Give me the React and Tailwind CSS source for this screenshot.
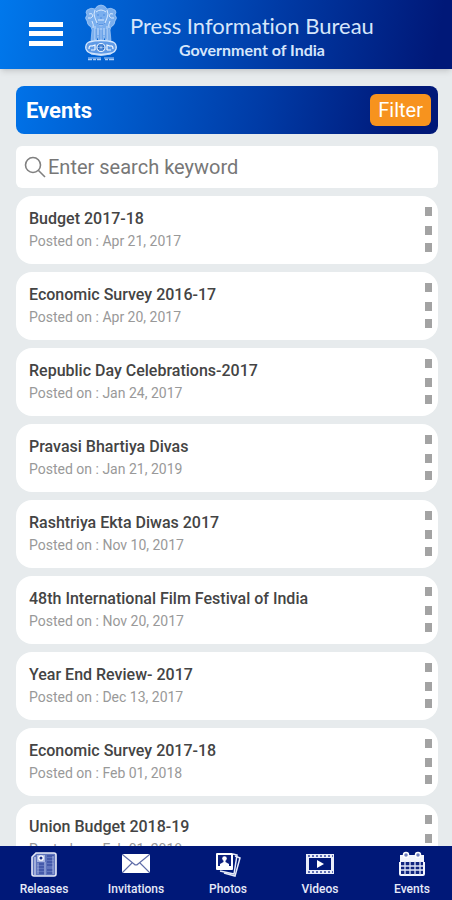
import React, { useState } from "react";

const events = [
  { title: "Budget 2017-18", date: "Apr 21, 2017" },
  { title: "Economic Survey 2016-17", date: "Apr 20, 2017" },
  { title: "Republic Day Celebrations-2017", date: "Jan 24, 2017" },
  { title: "Pravasi Bhartiya Divas", date: "Jan 21, 2019" },
  { title: "Rashtriya Ekta Diwas 2017", date: "Nov 10, 2017" },
  { title: "48th International Film Festival of India", date: "Nov 20, 2017" },
  { title: "Year End Review- 2017", date: "Dec 13, 2017" },
  { title: "Economic Survey 2017-18", date: "Feb 01, 2018" },
  { title: "Union Budget 2018-19", date: "Feb 01, 2018" },
];

const Emblem = () => (
  <svg width="34" height="58" viewBox="0 0 34 58" fill="none" aria-hidden="true">
    {/* lions */}
    <path
      d="M11 5 Q13 1 17 1 Q21 1 23 5 Q27 3 31 6 Q33 8 31 11 Q34 14 31 17 Q31 21 27 23 L26 26 L27 37 H22 L20 32 L19 38 H15 L14 32 L12 37 H7 L8 26 L7 23 Q3 21 3 17 Q0 14 3 11 Q1 8 3 6 Q7 3 11 5 Z"
      fill="#8fbcf2"
      fillOpacity="0.85"
      stroke="#b9d6fa"
      strokeWidth="0.6"
    />
    <path
      d="M11 6 Q9 10 11 14 Q12 20 17 22 Q22 20 23 14 Q25 10 23 6 M12 8 Q17 4 22 8 M5 10 Q8 8 9 12 Q7 15 4 14 M29 10 Q26 8 25 12 Q27 15 30 14 M8 17 Q10 21 9 24 M26 17 Q24 21 25 24 M14 16 H20"
      stroke="#d8e9fe"
      strokeWidth="1"
    />
    <path d="M13 11 H15 M19 11 H21 M16 14 H18 M13 19 Q17 23 21 19" stroke="#4c8ade" strokeWidth="1" />
    <path
      d="M11 22 V36 M14 24 V31 M17 24 V37 M20 24 V31 M23 22 V36"
      stroke="#d8e9fe"
      strokeWidth="0.8"
    />
    <path d="M12 25 V35 M22 25 V35 M16 26 V36 M18 26 V36" stroke="#4c8ade" strokeWidth="0.6" />
    {/* abacus with the wheel */}
    <path d="M5 38 Q17 35 29 38 Q33 40 32 45 Q31 48 28 49 Q17 52 6 49 Q3 48 2 45 Q1 40 5 38 Z" fill="#5f9ae6" stroke="#d8e9fe" strokeWidth="1.3" />
    <circle cx="17" cy="43.5" r="4" fill="#1b63c4" stroke="#f0f7ff" strokeWidth="1.1" />
    <path d="M17 40 V47 M13.500 43.500 H20.500 M14.500 41 L19.500 46 M19.500 41 L14.500 46" stroke="#cfe3fc" strokeWidth="0.5" />
    <path d="M5 45 Q5 41 8 42 L11 41 L11 46 M29 45 Q29 41 26 42 L23 41 L23 46 M7 46 H11 M23 46 H27" stroke="#f0f7ff" strokeWidth="1.2" />
    <path d="M7 50 Q17 53 27 50" stroke="#bcd7f9" strokeWidth="1" />
    {/* motto */}
    <path d="M4 54 H17 M20 54 H30" stroke="#b9d6fa" strokeWidth="0.9" />
    <path d="M4 55.500 H8 M9 55.500 H12 M13 55.500 H17 M21 55.500 H24 M25 55.500 H30" stroke="#a9cbf6" strokeWidth="1.5" />
  </svg>
);

const ReleasesIcon = () => (
  <svg width="28" height="28" viewBox="0 0 28 28" fill="none" aria-hidden="true">
    <path d="M6 3 H24 Q26 3 26 5 V24 Q26 26 24 26 H4 Q2 26 2 24 V7 Z" fill="#5f74bd" stroke="#e6eaf8" strokeWidth="1.6" />
    <path d="M5 7 V25" stroke="#e6eaf8" strokeWidth="1" />
    <path d="M7 5 H15 V12 H7 Z" fill="#aab7e2" />
    <circle cx="11" cy="8" r="2.200" fill="#1c318c" stroke="#fff" strokeWidth="1.3" />
    <path d="M17 6 H24 M17 9 H24 M17 12 H24" stroke="#2c4199" strokeWidth="1.2" />
    <path d="M7 14 H14 M7 17 H14 M7 20 H14 M7 23 H14 M17 15 H23 M17 20 H23 M17 23 H23" stroke="#2c4199" strokeWidth="1" />
    <path d="M15 12 V25 M8 13 V24 M23 6 V24" stroke="#aab7e2" strokeWidth="1" />
  </svg>
);

const InvitationsIcon = () => (
  <svg width="28" height="28" viewBox="0 0 28 28" fill="none" aria-hidden="true">
    <rect x="0" y="4" width="28" height="19" rx="2" fill="#fff" />
    <path d="M1 5 L12 14 Q14 16 16 14 L27 5 M1 22 L10 13 M27 22 L18 13" stroke="#5f6da8" strokeWidth="1.1" />
  </svg>
);

const PhotosIcon = () => (
  <svg width="28" height="28" viewBox="0 0 28 28" fill="none" aria-hidden="true">
    <path d="M21 6 L26 8 L21 26 L10 23" stroke="#e6eaf8" strokeWidth="1.5" />
    <path d="M19 4 L23 5 L20 24 L6 21" stroke="#e6eaf8" strokeWidth="1.5" />
    <rect x="2" y="3" width="17" height="17" rx="1" fill="#fff" />
    <rect x="4" y="5" width="13" height="11" fill="#0b1f7d" />
    <circle cx="10.500" cy="8.500" r="2.300" fill="#fff" />
    <path d="M9.500 10 H11.500 V12 L15 14 V16 H6 V14 L9.500 12 Z" fill="#fff" />
  </svg>
);

const VideosIcon = () => (
  <svg width="28" height="28" viewBox="0 0 28 28" fill="none" aria-hidden="true">
    <rect x="0" y="4" width="28" height="20" fill="#e9edfa" />
    <rect x="3" y="8" width="22" height="12" fill="#001878" />
    <path d="M2 6 H27 M2 22 H27" stroke="#33479c" strokeWidth="1.600" strokeDasharray="2 2" />
    <path d="M11 10 L18 14 L11 18 Z" fill="#fff" />
  </svg>
);

const EventsIcon = () => (
  <svg width="28" height="28" viewBox="0 0 28 28" fill="none" aria-hidden="true">
    <path d="M2 5 H26 V12 H27 V24 Q27 26 25 26 H3 Q1 26 1 24 V12 H2 Z" fill="#f3f5fd" />
    <path d="M3 12 H25 V24 H3 Z" fill="#10257f" />
    <path d="M3 16 H25 M3 20 H25 M7 11 V25 M12 11 V25 M17 11 V25 M22 11 V25" stroke="#dfe5f7" strokeWidth="1.3" />
    <circle cx="8" cy="5" r="2.500" fill="#6d7dbd" stroke="#fff" strokeWidth="1.5" />
    <circle cx="20" cy="5" r="2.500" fill="#6d7dbd" stroke="#fff" strokeWidth="1.5" />
  </svg>
);

const tabs = [
  { label: "Releases", Icon: ReleasesIcon },
  { label: "Invitations", Icon: InvitationsIcon },
  { label: "Photos", Icon: PhotosIcon },
  { label: "Videos", Icon: VideosIcon },
  { label: "Events", Icon: EventsIcon },
];

const Header = () => (
  <header className="shrink-0 bg-linear-[100deg,#0078ec_0%,#0056c6_35%,#003ba6_60%,#001878_96%] shadow-md">
    <div className="flex items-start pl-7 pt-1 pb-1">
      <button type="button" aria-label="Menu" className="mt-4 text-white">
        <svg width="36" height="28" viewBox="0 0 36 28" fill="currentColor" aria-hidden="true">
          <rect x="1" y="2" width="34" height="5" />
          <rect x="1" y="11" width="34" height="5" />
          <rect x="1" y="21" width="34" height="5" />
        </svg>
      </button>
      <div className="ml-5 flex">
        <Emblem />
        <div className="ml-3 flex h-[61px] flex-col items-center pt-2 font-['Lato',sans-serif] text-[#d6e6fb] [font-variant-ligatures:none]">
          <h1 className="text-[22px] leading-7">Press Information Bureau</h1>
          <p className="text-base leading-5 font-bold">Government of India</p>
        </div>
      </div>
    </div>
  </header>
);

const SearchBox = ({ value, onChange }) => (
  <label className="flex h-[42px] items-center rounded-md bg-white pl-2">
    <svg width="22" height="22" viewBox="0 0 22 22" fill="none" stroke="#808080" strokeWidth="1.600" aria-hidden="true">
      <circle cx="9" cy="9" r="7.500" />
      <path d="M14.500 14.500 L21 21" />
    </svg>
    <input
      type="text"
      aria-label="Enter search keyword"
      placeholder="Enter search keyword"
      value={value}
      onChange={(event) => onChange(event.target.value)}
      className="ml-0.5 min-w-0 flex-1 bg-transparent text-xl text-[#444] outline-none placeholder:text-[#777]"
    />
  </label>
);

const EventCard = ({ title, date }) => (
  <li className="flex h-[68px] shrink-0 justify-between rounded-2xl bg-white pl-[13px] pr-1.5">
    <div className="pt-[11px]">
      <h3 className="text-base leading-6 font-medium text-[#444]">{title}</h3>
      <p className="text-sm leading-5 text-[#999]">Posted on : {date}</p>
    </div>
    <button type="button" aria-label={`Options for ${title}`}>
      <svg width="8" height="46" viewBox="0 0 8 46" fill="#a3a3a3" aria-hidden="true">
        <rect x="1" y="0" width="7" height="9" />
        <rect x="1" y="19" width="7" height="9" />
        <rect x="1" y="36" width="7" height="9" />
      </svg>
    </button>
  </li>
);

const App = () => {
  const [keyword, setKeyword] = useState("");

  const visible = events.filter((event) =>
    event.title.toLowerCase().includes(keyword.toLowerCase())
  );

  return (
    <div className="flex h-screen flex-col bg-[#e7ebed] font-['Roboto',sans-serif]">
      <Header />

      <main className="flex min-h-0 flex-1 flex-col pl-4 pr-3.5 pt-[17px]">
        <div className="flex h-12 shrink-0 items-center justify-between rounded-lg bg-linear-[100deg,#0072e8_0%,#0056c6_30%,#003ba6_58%,#001878_92%] pl-2.5 pr-[7px]">
          <h2 className="text-[22px] font-bold text-white">Events</h2>
          <button
            type="button"
            className="h-8 rounded-md bg-[#f7931e] px-2 text-xl text-white"
          >
            Filter
          </button>
        </div>

        <div className="mt-3 shrink-0">
          <SearchBox value={keyword} onChange={setKeyword} />
        </div>

        <ul className="mt-2 flex min-h-0 flex-1 flex-col gap-2 overflow-y-auto [scrollbar-width:none]">
          {visible.map((event) => (
            <EventCard key={event.title} title={event.title} date={event.date} />
          ))}
        </ul>
      </main>

      <nav className="flex h-[54px] shrink-0 justify-between bg-[#001878] pl-4 pr-3 pt-1">
        {tabs.map(({ label, Icon }) => (
          <a
            key={label}
            href={`#${label.toLowerCase()}`}
            className="flex w-14 flex-col items-center text-xs leading-4 font-medium whitespace-nowrap text-[#e6eaf8]"
          >
            <Icon />
            <span className="mt-[3px]">{label}</span>
          </a>
        ))}
      </nav>
    </div>
  );
};

export default App;
